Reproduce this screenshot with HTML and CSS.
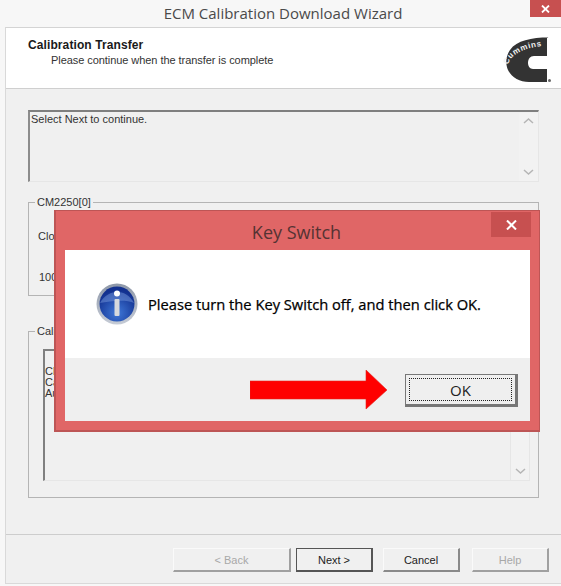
FILE: index.html
```html
<!DOCTYPE html>
<html lang="en">
<head>
  <meta charset="UTF-8" />
  <title>ECM Calibration Download Wizard</title>
  <link rel="stylesheet" href="styles.css">
</head>
<body>
  <div class="titlebar">
    <span class="title">ECM Calibration Download Wizard</span>
    <span class="close">
      <svg width="9" height="8" viewBox="0 0 9 8"><path d="M1 .5 8 7.5M8 .5 1 7.5" stroke="#fff" stroke-width="1.8"/></svg>
    </span>
  </div>

  <div class="wizard">
    <div class="head">
      <div class="head-text">
        <h4>Calibration Transfer</h4>
        <p>Please continue when the transfer is complete</p>
      </div>
      <svg class="logo" width="47" height="46" viewBox="0 0 47 46">
        <path d="M44 0C26 1 12 3 5 13C1 19 0 26 3 33C7 41 15 45 24 45H42V32H28C25 32 23 29 23 26C23 22 25 19 29 19H42V0Z" fill="#333"/>
        <path id="logoArc" d="M3 28C6 16 21 10 46 8" fill="none"/>
        <text class="logo-text"><textPath href="#logoArc">Cummins</textPath></text>
        <circle cx="44.500" cy="43.500" r="1.500" fill="#666"/>
      </svg>
    </div>

    <div class="content">
      <div class="status-box">
        <span>Select Next to continue.</span>
        <div class="scroll">
          <svg width="11" height="6" viewBox="0 0 11 6"><path d="M1 5 5.500 1 10 5" class="chev"/></svg>
          <svg width="11" height="6" viewBox="0 0 11 6"><path d="M1 1 5.500 5 10 1" class="chev"/></svg>
        </div>
      </div>

      <fieldset class="group group-device">
        <legend>CM2250[0]</legend>
        <div class="row-clock">Clo</div>
        <div class="row-pct">100</div>
      </fieldset>

      <fieldset class="group group-cal">
        <legend>Cali</legend>
        <div class="inner-box">
          <div class="inner-text">Cl<br>Ca<br>Au</div>
          <div class="scroll scroll-inner">
            <svg width="11" height="6" viewBox="0 0 11 6"><path d="M1 1 5.500 5 10 1" class="chev"/></svg>
          </div>
        </div>
      </fieldset>
    </div>

    <div class="foot">
      <button class="btn btn-back" disabled>&lt; Back</button>
      <button class="btn btn-next">Next &gt;</button>
      <button class="btn btn-cancel">Cancel</button>
      <button class="btn btn-help" disabled>Help</button>
    </div>
  </div>

  <div class="dialog">
    <div class="dialog-title">
      <span>Key Switch</span>
      <span class="dialog-close">
        <svg width="11" height="10" viewBox="0 0 11 10"><path d="M1 .5 10 9.500M10 .5 1 9.500" stroke="#fff" stroke-width="2"/></svg>
      </span>
    </div>
    <div class="dialog-msg">
      <svg class="info" width="42" height="42" viewBox="0 0 42 42">
        <defs>
          <radialGradient id="infoBlue" cx="50%" cy="75%" r="65%">
            <stop offset="0" stop-color="#3f78d8"/>
            <stop offset="1" stop-color="#12308f"/>
          </radialGradient>
          <linearGradient id="infoRing" x1="0" y1="0" x2="0" y2="1">
            <stop offset="0" stop-color="#8d97a8"/>
            <stop offset="1" stop-color="#c6ccd6"/>
          </linearGradient>
        </defs>
        <circle cx="21" cy="21" r="20.500" fill="url(#infoRing)"/>
        <circle cx="21" cy="21" r="17.500" fill="url(#infoBlue)"/>
        <path d="M4 20C8 12 16 9 21 9C27 9 34 12 38 20C30 16 14 18 4 20Z" fill="#7f9fe0" opacity=".45"/>
        <circle cx="21" cy="10.500" r="3" fill="#fff"/>
        <rect x="18.500" y="16" width="5" height="17" rx="1" fill="#d6d9dd"/>
      </svg>
      <span>Please turn the Key Switch off, and then click OK.</span>
    </div>
    <div class="dialog-foot">
      <svg class="arrow" width="138" height="40" viewBox="0 0 138 40">
        <path d="M0 11H116V0L137 20 116 39V29H0Z" fill="#f00" stroke="#e2211c" stroke-width=".6"/>
      </svg>
      <button class="ok"><span>OK</span></button>
    </div>
  </div>
</body>
</html>
```

FILE: styles.css
```css
* { margin:0; padding:0; box-sizing:border-box }
html, body { width:561px; height:586px; overflow:hidden }
body {
  background:#f7f7f7;
  font-family:"Liberation Sans",sans-serif;
  font-size:11px;
  color:#222;
  position:relative;
}

/* outer window */
.titlebar {
  height:27px;
  display:flex; justify-content:center;
  position:relative;
}
.title {
  font-family:"Open Sans",sans-serif;
  font-size:15px; line-height:26px; color:#4a4a4a;
  margin-left:5px;
}
.close {
  position:absolute; top:0; right:0;
  width:31px; height:17px;
  background:#c75050;
  display:flex; align-items:center; justify-content:center;
}

.wizard {
  height:557px;
  margin-left:5px;
  border-top:1px solid #d4d4d4;
  border-left:1px solid #d9d9d9;
  border-bottom:1px solid #d9d9d9;
  background:#f0f0f0;
  display:flex; flex-direction:column;
}
.head {
  height:61px;
  background:#fff;
  border-bottom:1px solid #cfcfcf;
  display:flex; justify-content:space-between;
  padding:9px 9px 0 22px;
}
.head h4 { font-size:12px; font-weight:bold; color:#1a1a1a; line-height:15px; margin-top:1px; letter-spacing:.1px }
.head p { margin-left:23px; line-height:14px; color:#333; letter-spacing:-.06px }
.logo { flex:none; overflow:visible }
.logo-text { font:bold 8px "Liberation Sans",sans-serif; fill:#f2f2f2; letter-spacing:.7px }

.content { flex:1; padding:21px 22px 0 22px }
.status-box {
  width:511px; height:72px;
  border-top:2px solid #7f7f7f;
  border-left:2px solid #8c8c8c;
  border-right:1px solid #e6e6e6;
  border-bottom:1px solid #e6e6e6;
  padding:1px 0 0 1px;
  display:flex; justify-content:space-between;
  color:#333;
}
.scroll {
  width:19px;
  display:flex; flex-direction:column; align-items:center; justify-content:space-between;
  padding:5px 0 6px;
  background:#f2f2f2;
}
.chev { fill:none; stroke:#b5b5b5; stroke-width:1.500 }

.group {
  width:511px;
  border:1px solid #b4b4b4;
}
.group legend { margin-left:6px; padding:0 2px; line-height:14px; color:#333 }
.group-device { height:101px; margin-top:13px; padding-top:20px }
.row-clock, .row-pct { line-height:14px; margin-left:9px; color:#333 }
.row-pct { margin-top:27px; margin-left:10px }
.group-cal { height:174px; margin-top:28px; padding-top:11px }
.inner-box {
  height:132px;
  margin:0 8px 0 14px;
  border-top:2px solid #808080;
  border-left:2px solid #808080;
  border-right:1px solid #e6e6e6;
  border-bottom:1px solid #e6e6e6;
  display:flex; justify-content:space-between;
}
.inner-text { padding-top:15px; line-height:11px; color:#333 }
.scroll-inner { justify-content:flex-end; padding-bottom:6px; border-left:1px solid #e6e6e6 }

.foot {
  height:49px;
  border-top:1px solid #cdcdcd;
  padding:13px 10px 0 167px;
  display:flex;
}
.btn {
  height:24px;
  font:11px "Liberation Sans",sans-serif;
  color:#222;
  background:#f0f0f0;
  border:1px solid #fafafa;
  border-right:2px solid #8a8a8a;
  border-bottom:2px solid #8a8a8a;
}
.btn:disabled { color:#a8a8a8 }
.btn-back { width:118px; margin-right:5px; border-right-color:#a0a0a0; border-bottom-color:#a0a0a0 }
.btn-next { width:77px; margin-right:10px; border:1px solid #555; border-right-width:2px; border-bottom-width:2px }
.btn-cancel { width:77px; margin-right:12px }
.btn-help { width:77px; border-right-color:#a0a0a0; border-bottom-color:#a0a0a0 }

/* key switch message box, lies over the wizard */
.dialog {
  position:absolute; left:54px; top:210px;
  width:486px; height:222px;
  background:#e06666;
  border:1px solid #bd5555;
  border-width:1px 1px 2px 2px;
  padding:0 9px 9px 9px;
  display:flex; flex-direction:column;
}
.dialog-title {
  height:39px; flex:none;
  display:flex; align-items:center; justify-content:center;
  font-family:"Open Sans",sans-serif;
  font-size:18px; color:#553333;
  position:relative;
}
.dialog-title > span:first-child { position:relative; top:1px; left:-1px }
.dialog-close {
  position:absolute; top:1px; right:-1px;
  width:40px; height:25px;
  background:#c75050;
  display:flex; align-items:center; justify-content:center;
}
.dialog-msg {
  height:108px; flex:none;
  background:#fff;
  display:flex; align-items:center;
  padding:0 0 1px 31px;
  font-family:"Open Sans",sans-serif;
  font-size:14.700px; font-weight:500; color:#000;
  -webkit-text-stroke:.25px #000;
  gap:10px;
}
.info { flex:none }
.dialog-foot {
  flex:1;
  background:#efefef;
  display:flex; justify-content:flex-end; align-items:flex-start;
  padding:16px 12px 0 0;
}
.arrow { flex:none; margin:-4px 17px 0 0 }
.ok {
  width:113px; height:33px;
  padding:3px;
  background:#efefef;
  border:1px solid #777;
  border-right:3px solid #777;
  border-bottom:3px solid #777;
  font-family:"Open Sans",sans-serif;
  font-size:15px; color:#222;
}
.ok span {
  display:flex; align-items:center; justify-content:center;
  height:100%;
  border:1px dotted #222;
}
```
